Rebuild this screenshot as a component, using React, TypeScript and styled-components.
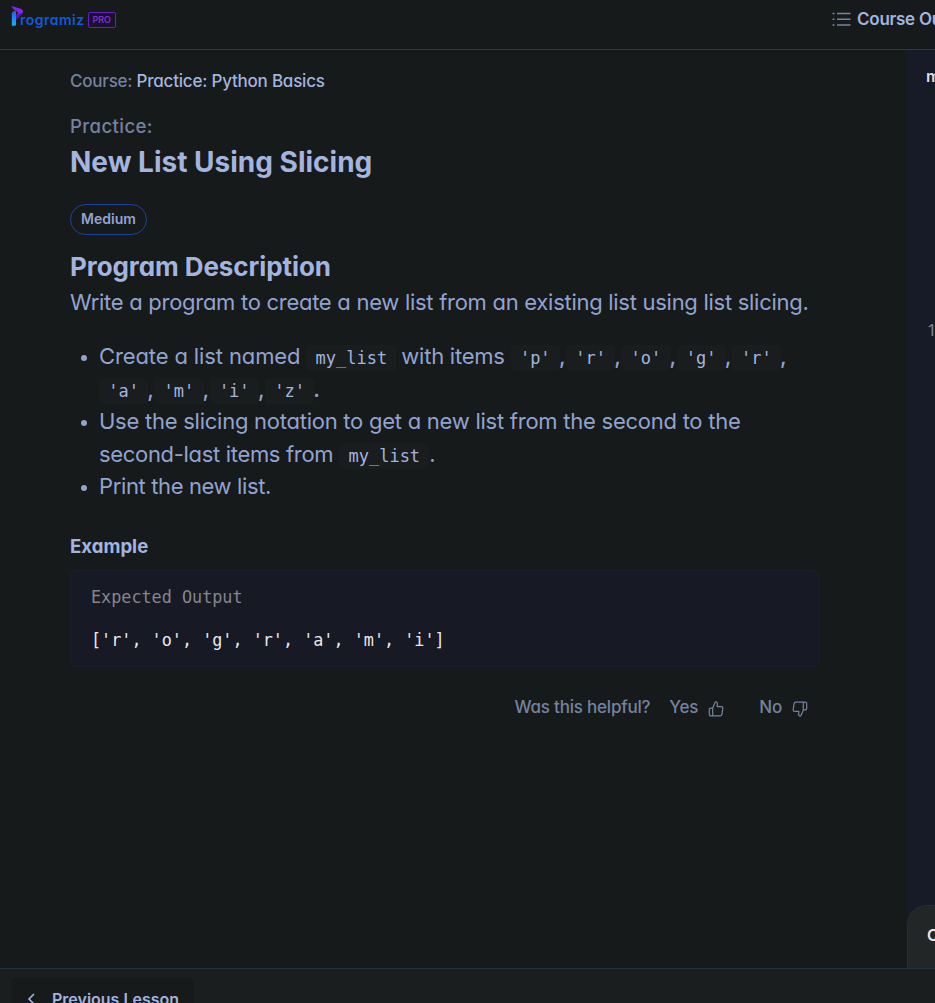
import React from 'react';
import styled, { createGlobalStyle } from 'styled-components';

const GlobalStyle = createGlobalStyle`
  * { box-sizing: border-box; }
  body {
    margin: 0;
    overflow: hidden;
    background: #161a1b;
    font-family: Inter, 'Liberation Sans', sans-serif;
    font-feature-settings: 'cv11' 1;
  }
  h1, h2, h3, p, ul, pre { margin: 0; padding: 0; font-weight: inherit; }
`;

const mono = `'DejaVu Sans Mono', 'Liberation Mono', monospace`;

const Page = styled.div`
  display: flex;
  flex-direction: column;
  width: 935px;
  height: 1003px;
  overflow: hidden;
  background: #161a1b;
  color: #92a3cf;
`;

const Header = styled.header`
  display: flex;
  flex: none;
  justify-content: space-between;
  height: 50px;
  border-bottom: 1px solid #2a3942;
  padding-left: 10px;
  overflow: hidden;
`;

const Logo = styled.div`
  display: flex;
  align-items: flex-start;
  padding-top: 6px;
`;

const LogoWord = styled.span`
  margin: 6px 0 0 -4px;
  font-size: 14px;
  line-height: 16px;
  font-weight: 600;
  letter-spacing: 0.5px;
  color: #1459d9;
`;

const ProBadge = styled.span`
  margin: 6px 0 0 3px;
  width: 28px;
  height: 16px;
  border: 1.5px solid #6420c0;
  border-radius: 2px;
  background: #1c1030;
  color: #7a2fd0;
  font-size: 9px;
  line-height: 13px;
  font-weight: 600;
  text-align: center;
`;

const Outline = styled.div`
  display: flex;
  flex: none;
  width: 103px;
  height: 38px;
  align-items: center;
  gap: 6px;
  white-space: nowrap;
  overflow: hidden;
  font-size: 17px;
  font-weight: 600;
  letter-spacing: -0.25px;
  color: #a3b4df;
  svg { flex: none; }
`;

const Main = styled.main`
  display: flex;
  flex: none;
  height: 918px;
`;

const Lesson = styled.section`
  width: 907px;
  padding: 18px 88px 0 70px;
`;

const Line = styled.p<{ $size: number; $lh: number; $ls?: number; $w?: number; $c?: string; $mt?: number }>`
  font-size: ${p => p.$size}px;
  line-height: ${p => p.$lh}px;
  letter-spacing: ${p => p.$ls ?? 0}px;
  font-weight: ${p => p.$w ?? 400};
  color: ${p => p.$c ?? '#92a3cf'};
  margin-top: ${p => p.$mt ?? 0}px;
  white-space: nowrap;
`;

const Strong = styled.span`
  color: #a3b4df;
`;

const Difficulty = styled.div`
  display: flex;
  justify-content: center;
  width: 77px;
  height: 31px;
  margin-top: 22px;
  border: 1px solid #1d429b;
  border-radius: 16px;
  font-size: 14px;
  line-height: 27px;
  font-weight: 600;
  color: #92a3cf;
`;

const Tasks = styled.ul`
  margin-top: 21px;
  list-style: none;
`;

const Task = styled.li`
  display: flex;
  gap: 12px;
  padding-left: 11px;
`;

const Bullet = styled.span`
  flex: none;
  width: 6px;
  height: 6px;
  margin-top: 15px;
  border-radius: 50%;
  background: #92a3cf;
`;

const TaskLine = styled.div<{ $ls?: number }>`
  height: 32.5px;
  font-size: 22px;
  line-height: 32.5px;
  letter-spacing: ${p => p.$ls ?? 0}px;
  white-space: pre;
  display: flex;
`;

const Code = styled.code<{ $w: number }>`
  flex: none;
  width: ${p => p.$w}px;
  height: 26px;
  margin-top: 5px;
  border-radius: 4px;
  background: #1a1d1e;
  text-align: center;
  font-family: ${mono};
  font-size: 17px;
  line-height: 26px;
  letter-spacing: 0;
  color: #a3b4df;
`;

const Named = styled(Code)<{ $end?: number }>`
  margin-left: 6px;
  margin-right: ${p => p.$end ?? 5}px;
`;

const Comma = styled.span`
  flex: none;
  width: 6px;
  letter-spacing: 0;
  font-weight: 500;
  text-indent: -1px;
`;

const Output = styled.div`
  width: 749px;
  height: 97px;
  margin-top: 11px;
  padding: 14px 20px;
  border: 1px solid #1c1c2c;
  border-radius: 5px;
  background: #171a25;
  font-family: ${mono};
  font-size: 16.8px;
`;

const OutputTitle = styled.div`
  line-height: 24px;
  color: #85868c;
`;

const OutputText = styled.pre`
  margin-top: 19px;
  font-family: inherit;
  line-height: 24px;
  color: #e8e8ea;
`;

const Feedback = styled.div`
  display: flex;
  align-items: center;
  justify-content: flex-end;
  height: 26px;
  margin-top: 27px;
  padding-right: 11px;
  font-size: 17px;
  font-weight: 500;
  letter-spacing: -0.2px;
  color: #75829f;
  white-space: nowrap;
`;

const Vote = styled.span<{ $ml: number }>`
  display: flex;
  align-items: center;
  gap: 10px;
  margin-left: ${p => p.$ml}px;
  svg { margin-top: 4px; }
`;

const Editor = styled.aside`
  display: flex;
  flex-direction: column;
  justify-content: space-between;
  width: 28px;
  background: #171a27;
  overflow: hidden;
`;

const FileTab = styled.div`
  padding: 15px 0 0 19px;
  height: 270px;
  font-size: 16px;
  line-height: 22px;
  font-weight: 600;
  color: #dedee2;
`;

const LineNumber = styled.div`
  flex: 1;
  padding-left: 20px;
  font-family: 'Noto Sans', sans-serif;
  font-size: 17px;
  line-height: 20px;
  color: #85868c;
`;

const ConsolePanel = styled.div`
  width: 80px;
  height: 63px;
  padding: 18px 0 0 19px;
  border: 1px solid #2a2d2f;
  border-bottom: 0;
  border-radius: 20px 0 0 0;
  background: #232627;
  font-size: 16px;
  line-height: 22px;
  font-weight: 600;
  color: #e8e8ea;
`;

const Footer = styled.footer`
  flex: none;
  height: 35px;
  padding: 9px 0 0 11px;
  border-top: 1px solid #25323a;
  background: #1a1e1f;
  overflow: hidden;
`;

const Previous = styled.div`
  display: flex;
  align-items: center;
  gap: 17px;
  width: 183px;
  height: 42px;
  padding-left: 16px;
  border-radius: 5px;
  background: #161a1b;
  color: #a3b4df;
  font-size: 16px;
  font-weight: 600;
  white-space: nowrap;
`;

const LogoMark = () => (
  <svg width="14" height="21" viewBox="0 0 14 21">
    <defs>
      <linearGradient id="stem" x1="0" y1="0" x2="0" y2="1">
        <stop offset="0" stopColor="#255bea" />
        <stop offset="1" stopColor="#10b7ef" />
      </linearGradient>
      <linearGradient id="bowl" x1="0" y1="0" x2="1" y2="1">
        <stop offset="0" stopColor="#7622dc" />
        <stop offset="1" stopColor="#922ce8" />
      </linearGradient>
    </defs>
    <path d="M1.8 7.5 Q2 5 4.5 5 H6 V18.5 Q6 19.8 4.6 19.8 H1.8Z" fill="url(#stem)" />
    <path d="M1.8 0 L11.5 3 Q14.2 4.8 12.4 7.6 L6 13.8 V9.3 L8.5 6.8 L6 5 Q2 3.2 1.8 0Z" fill="url(#bowl)" />
    <path d="M6 9.3 L12.9 6.4 L12.2 7.8 L6 13.8Z" fill="#4b15bc" />
  </svg>
);

const ListIcon = () => (
  <svg width="19" height="15" viewBox="0 0 19 15" stroke="#75829f" strokeWidth="1.5">
    <path d="M0.5 1.5h2M5 1.5H18.5M0.5 7.2h2M5 7.2H18.5M0.5 12.9h2M5 12.9H18.5" />
  </svg>
);

const Thumb = ({ down = false }: { down?: boolean }) => (
  <svg
    width="16" height="16" viewBox="0 0 16 17" fill="none" stroke="currentColor"
    strokeWidth="1.3" strokeLinejoin="round" strokeLinecap="round"
    transform={down ? 'rotate(180)' : undefined}
  >
    <path d="M4.5 7.5 L7 1.6 Q7.3 0.8 8.2 1 Q9.8 1.5 9.6 3.4 L9.2 6 H13.8 Q15.5 6.2 15.2 7.9 L14.3 14.3 Q14 15.8 12.5 15.8 H2.5 Q0.9 15.8 0.9 14.2 V9 Q0.9 7.5 2.5 7.5 H4.5 V15.8" />
  </svg>
);

const Items = ({ values, end }: { values: string[]; end: string }) => (
  <>
    {values.map((v, i) => (
      <React.Fragment key={i}>
        <Code $w={49.3}>{`'${v}'`}</Code>
        <Comma>{i === values.length - 1 ? end : ','}</Comma>
      </React.Fragment>
    ))}
  </>
);

export default function App() {
  return (
    <Page>
      <GlobalStyle />
      <Header>
        <Logo>
          <LogoMark />
          <LogoWord>rogramiz</LogoWord>
          <ProBadge>PRO</ProBadge>
        </Logo>
        <Outline><ListIcon />Course Outline</Outline>
      </Header>
      <Main>
        <Lesson>
          <Line $size={17} $lh={26} $ls={-0.22} $w={500} $c="#75829f">Course: <Strong>Practice: Python Basics</Strong></Line>
          <Line $size={18.6} $lh={26} $ls={0.4} $w={500} $c="#75829f" $mt={19}>Practice:</Line>
          <Line as="h1" $size={28} $lh={40} $w={700} $c="#a3b4df" $mt={3}>New List Using Slicing</Line>
          <Difficulty>Medium</Difficulty>
          <Line as="h2" $size={26} $lh={36} $ls={-0.08} $w={700} $c="#a3b4df" $mt={14}>Program Description</Line>
          <Line $size={22} $lh={34} $ls={-0.28}>Write a program to create a new list from an existing list using list slicing.</Line>
          <Tasks>
            <Task>
              <Bullet />
              <div>
                <TaskLine $ls={-0.12}>Create a list named<Named $w={90}>my_list</Named><span style={{ letterSpacing: -0.25 }}>with items</span><Named $w={49.3} $end={0}>'p'</Named><Comma>,</Comma><Items values={['r', 'o', 'g', 'r']} end="," /></TaskLine>
                <TaskLine><Items values={['a', 'm', 'i', 'z']} end="." /></TaskLine>
              </div>
            </Task>
            <Task>
              <Bullet />
              <div>
                <TaskLine $ls={-0.25}>Use the slicing notation to get a new list from the second to the</TaskLine>
                <TaskLine $ls={-0.32}>second-last items from<Named $w={90} $end={0}>my_list</Named>.</TaskLine>
              </div>
            </Task>
            <Task>
              <Bullet />
              <TaskLine $ls={-0.37}>Print the new list.</TaskLine>
            </Task>
          </Tasks>
          <Line as="h3" $size={18.6} $lh={26} $w={700} $c="#a3b4df" $mt={30}>Example</Line>
          <Output>
            <OutputTitle>Expected Output</OutputTitle>
            <OutputText>['r', 'o', 'g', 'r', 'a', 'm', 'i']</OutputText>
          </Output>
          <Feedback>
            <span>Was this helpful?</span>
            <Vote $ml={19}>Yes <Thumb /></Vote>
            <Vote $ml={35}>No <Thumb down /></Vote>
          </Feedback>
        </Lesson>
        <Editor>
          <FileTab>main.py</FileTab>
          <LineNumber>1</LineNumber>
          <ConsolePanel>Console</ConsolePanel>
        </Editor>
      </Main>
      <Footer>
        <Previous>
          <svg width="8" height="12" viewBox="0 0 8 12" fill="none" stroke="currentColor" strokeWidth="1.6"><path d="M7 1 2 6l5 5" /></svg>
          Previous Lesson
        </Previous>
      </Footer>
    </Page>
  );
}
